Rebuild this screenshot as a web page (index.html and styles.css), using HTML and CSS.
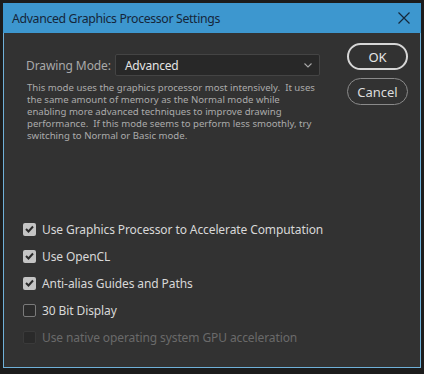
FILE: index.html
```html
<!DOCTYPE html>
<html>
<head>
<meta charset="utf-8">
<link rel="stylesheet" href="styles.css">
</head>
<body>
<div class="window">
  <div class="titlebar">
    <span class="title">Advanced Graphics Processor Settings</span>
    <svg class="close" width="12" height="12" viewBox="0 0 12 12"><path d="M0.5 0.5 L11.5 11.5 M11.5 0.5 L0.5 11.5" stroke="#15283a" stroke-width="1.2" fill="none"/></svg>
  </div>
  <div class="content">
    <div class="main">
      <div class="mode-row">
        <span class="mode-label">Drawing Mode:</span>
        <div class="select">
          <span>Advanced</span>
          <svg width="8" height="5" viewBox="0 0 8 5"><path d="M0.5 0.5 L4 4 L7.5 0.5" stroke="#a8a8a8" stroke-width="1.1" fill="none"/></svg>
        </div>
      </div>
      <p class="desc">This mode uses the graphics processor most intensively.&nbsp; It uses the same amount of memory as the Normal mode while enabling more advanced techniques to improve drawing performance.&nbsp; If this mode seems to perform less smoothly, try switching to Normal or Basic mode.</p>
      <ul class="checks">
        <li class="check on"><span class="box"><svg width="9" height="8" viewBox="0 0 9 8"><path d="M1 4 L3.5 6.5 L8 1.5" stroke="#2a2a2a" stroke-width="2" fill="none"/></svg></span>Use Graphics Processor to Accelerate Computation</li>
        <li class="check on"><span class="box"><svg width="9" height="8" viewBox="0 0 9 8"><path d="M1 4 L3.5 6.5 L8 1.5" stroke="#2a2a2a" stroke-width="2" fill="none"/></svg></span>Use OpenCL</li>
        <li class="check on"><span class="box"><svg width="9" height="8" viewBox="0 0 9 8"><path d="M1 4 L3.5 6.5 L8 1.5" stroke="#2a2a2a" stroke-width="2" fill="none"/></svg></span>Anti-alias Guides and Paths</li>
        <li class="check off"><span class="box"></span>30 Bit Display</li>
        <li class="check disabled"><span class="box"></span>Use native operating system GPU acceleration</li>
      </ul>
    </div>
    <div class="buttons">
      <button class="btn ok">OK</button>
      <button class="btn cancel">Cancel</button>
    </div>
  </div>
</div>
</body>
</html>
```
FILE: styles.css
```css
html, body {
  margin: 0;
  padding: 0;
}
body {
  background: #1c1c1c;
  width: 424px;
  height: 374px;
  padding: 3px 0 0 3px;
  box-sizing: border-box;
  font-family: "Noto Sans", "Open Sans", sans-serif;
}
.window {
  width: 418px;
  height: 365px;
  box-sizing: border-box;
  background: #323232;
  border: 1px solid #6fb0d8;
  border-top: none;
  display: flex;
  flex-direction: column;
}
.titlebar {
  height: 30px;
  background: #3d97cf;
  margin: 0 -1px;
  display: flex;
  align-items: center;
  justify-content: space-between;
  padding: 0 11px 0 9px;
  flex-shrink: 0;
}
.title {
  color: #15263a;
  font-size: 12.3px;
  letter-spacing: -0.35px;
}
.close {
  display: block;
}
.content {
  flex: 1;
  display: flex;
}
.main {
  flex: 1;
  padding: 21px 0 0 22px;
}
.mode-row {
  display: flex;
  align-items: center;
  gap: 4px;
}
.mode-label {
  color: #a9a9a9;
  font-size: 12px;
  letter-spacing: -0.1px;
}
.select {
  width: 205px;
  height: 22px;
  box-sizing: border-box;
  background: #282828;
  border: 1px solid #444;
  border-radius: 2px;
  display: flex;
  align-items: center;
  justify-content: space-between;
  padding: 0 7px 0 9px;
  color: #e4e4e4;
  font-size: 12px;
  letter-spacing: -0.2px;
}
.desc {
  margin: 6px 0 0 1px;
  width: 290px;
  color: #ababab;
  font-size: 9.6px;
  line-height: 12px;
}
.checks {
  list-style: none;
  margin: 78px 0 0 -3px;
  padding: 0;
  display: flex;
  flex-direction: column;
  gap: 9px;
}
.check {
  display: flex;
  align-items: center;
  gap: 6px;
  height: 18px;
  color: #d8d8d8;
  font-size: 12px;
  letter-spacing: -0.1px;
}
.box {
  width: 13px;
  height: 13px;
  box-sizing: border-box;
  border-radius: 2px;
  display: flex;
  align-items: center;
  justify-content: center;
}
.on .box {
  background: #c4c4c4;
}
.off .box {
  border: 1px solid #7a7a7a;
  background: #2c2c2c;
}
.disabled {
  color: #6a6a6a;
}
.disabled .box {
  background: #2a2a2a;
  border: 1px solid #3a3a3a;
}
.buttons {
  display: flex;
  flex-direction: column;
  gap: 8px;
  padding: 10px 12px 0 0;
}
.btn {
  width: 61px;
  height: 27px;
  border-radius: 14px;
  background: transparent;
  font-family: "Noto Sans", "Open Sans", sans-serif;
  font-size: 13px;
  padding: 0;
}
.ok {
  border: 2px solid #d6d6d6;
  color: #e6e6e6;
}
.cancel {
  border: 1.5px solid #8a8a8a;
  color: #dcdcdc;
}
```
